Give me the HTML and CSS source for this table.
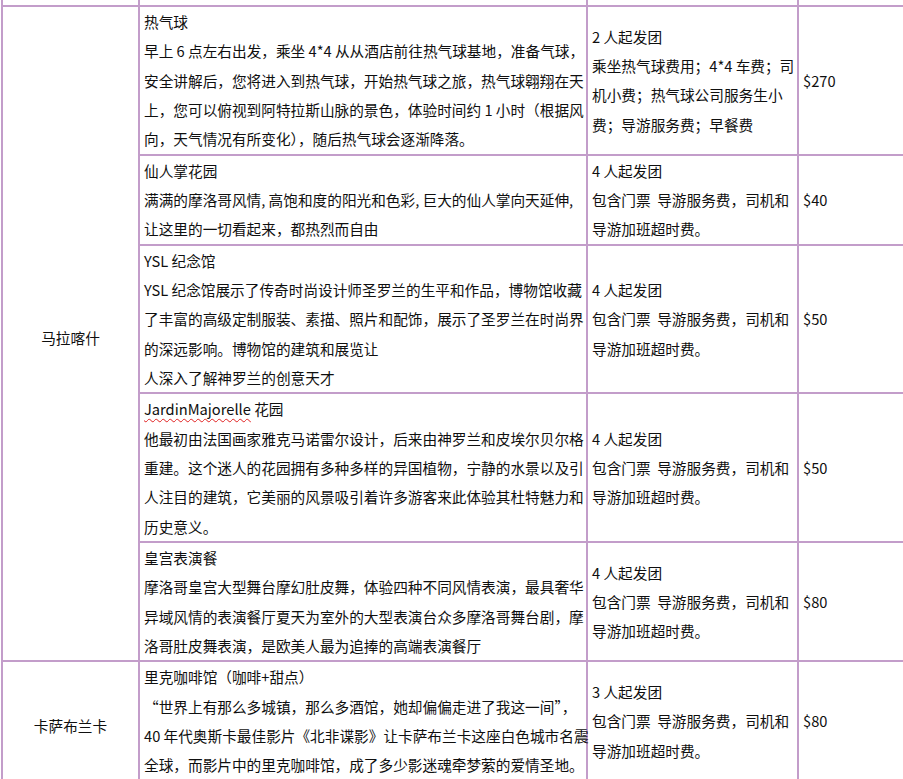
FILE: index.html
```html
<!DOCTYPE html>
<html lang="zh-CN">
<head>
<meta charset="utf-8">
<title>行程价格表</title>
<link rel="stylesheet" href="styles.css">
</head>
<body>
<table class="tbl">
  <colgroup>
    <col class="c-city">
    <col class="c-desc">
    <col class="c-grp">
    <col class="c-price">
  </colgroup>
  <tr class="stub"><td></td><td></td><td></td><td></td></tr>
  <tr>
    <td class="city" rowspan="5">马拉喀什</td>
    <td class="desc">热气球<br>早上 6 点左右出发，乘坐 4*4 从从酒店前往热气球基地，准备气球，<br>安全讲解后，您将进入到热气球，开始热气球之旅，热气球翱翔在天<br>上，您可以俯视到阿特拉斯山脉的景色，体验时间约 1 小时（根据风<br>向，天气情况有所变化），随后热气球会逐渐降落。</td>
    <td class="grp">2 人起发团<br>乘坐热气球费用；4*4 车费；司<br>机小费；热气球公司服务生小<br>费；导游服务费；早餐费</td>
    <td class="price">$270</td>
  </tr>
  <tr>
    <td class="desc">仙人掌花园<br>满满的摩洛哥风情, 高饱和度的阳光和色彩, 巨大的仙人掌向天延伸, <br>让这里的一切看起来，都热烈而自由</td>
    <td class="grp">4 人起发团<br>包含门票&nbsp; 导游服务费，司机和<br>导游加班超时费。</td>
    <td class="price">$40</td>
  </tr>
  <tr>
    <td class="desc">YSL 纪念馆<br>YSL 纪念馆展示了传奇时尚设计师圣罗兰的生平和作品，博物馆收藏<br>了丰富的高级定制服装、素描、照片和配饰，展示了圣罗兰在时尚界<br>的深远影响。博物馆的建筑和展览让<br>人深入了解神罗兰的创意天才</td>
    <td class="grp">4 人起发团<br>包含门票&nbsp; 导游服务费，司机和<br>导游加班超时费。</td>
    <td class="price">$50</td>
  </tr>
  <tr>
    <td class="desc"><span class="spell">JardinMajorelle</span> 花园<br>他最初由法国画家雅克马诺雷尔设计，后来由神罗兰和皮埃尔贝尔格<br>重建。这个迷人的花园拥有多种多样的异国植物，宁静的水景以及引<br>人注目的建筑，它美丽的风景吸引着许多游客来此体验其杜特魅力和<br>历史意义。</td>
    <td class="grp">4 人起发团<br>包含门票&nbsp; 导游服务费，司机和<br>导游加班超时费。</td>
    <td class="price">$50</td>
  </tr>
  <tr>
    <td class="desc">皇宫表演餐<br>摩洛哥皇宫大型舞台摩幻肚皮舞，体验四种不同风情表演，最具奢华<br>异域风情的表演餐厅夏天为室外的大型表演台众多摩洛哥舞台剧，摩<br>洛哥肚皮舞表演，是欧美人最为追捧的高端表演餐厅</td>
    <td class="grp">4 人起发团<br>包含门票&nbsp; 导游服务费，司机和<br>导游加班超时费。</td>
    <td class="price">$80</td>
  </tr>
  <tr>
    <td class="city">卡萨布兰卡</td>
    <td class="desc">里克咖啡馆（咖啡+甜点）<br>“世界上有那么多城镇，那么多酒馆，她却偏偏走进了我这一间”，<br>40 年代奥斯卡最佳影片《北非谍影》让卡萨布兰卡这座白色城市名震<br>全球，而影片中的里克咖啡馆，成了多少影迷魂牵梦萦的爱情圣地。</td>
    <td class="grp">3 人起发团<br>包含门票&nbsp; 导游服务费，司机和<br>导游加班超时费。</td>
    <td class="price">$80</td>
  </tr>
</table>
</body>
</html>
```
FILE: styles.css
```css
html, body {
  margin: 0;
  padding: 0;
  background: #ffffff;
}

body {
  font-family: "Noto Sans CJK SC", "Noto Sans", sans-serif;
  font-size: 14.67px;
  color: #0f0f0f;
}

.tbl {
  border-collapse: collapse;
  table-layout: fixed;
  width: 907px;
  margin-left: 1px;
}

.c-city { width: 137px; }
.c-desc { width: 448px; }
.c-grp { width: 211px; }
.c-price { width: 111px; }

.tbl td {
  border: 2px solid #c39dca;
  padding: 0 4px;
  line-height: 29.33px;
  white-space: nowrap;
  vertical-align: middle;
}

.tbl .stub td {
  border-top: none;
  height: 5px;
  padding: 0;
  line-height: 0;
}

.tbl td.city {
  text-align: center;
  padding-top: 9px;
}

.spell {
  text-decoration: underline wavy #e02020;
  text-decoration-thickness: 1px;
  text-underline-offset: 3px;
}
```
